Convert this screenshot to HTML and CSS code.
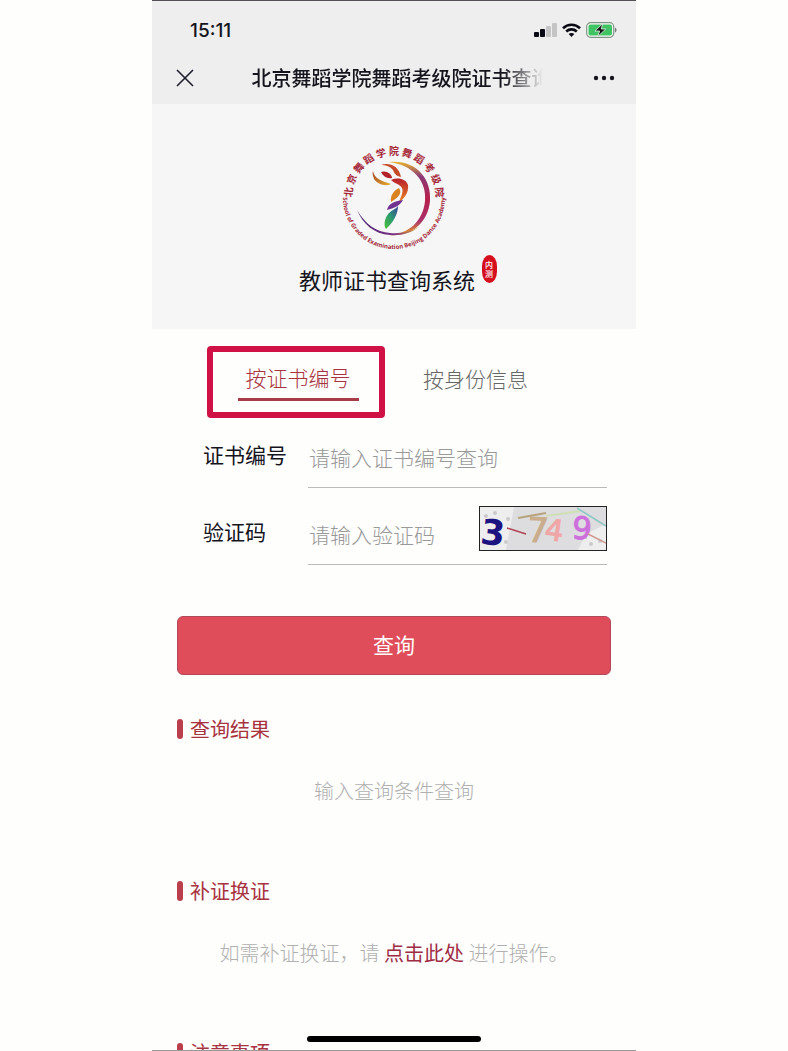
FILE: index.html
```html
<!DOCTYPE html>
<html lang="zh-CN">
<head>
    <meta charset="UTF-8">
    <meta name="viewport" content="width=device-width, initial-scale=1">
    <title>教师证书查询系统</title>
    <link rel="stylesheet" href="styles.css">
</head>
<body>
    <div class="phone">
        <header class="top-bar">
            <div class="status">
                <span class="time">15:11</span>
                <div class="status-icons">
                    <svg width="23" height="14" viewBox="0 0 23 14">
                        <rect x="0" y="9" width="5" height="5" rx="1" fill="#0a0a14"/>
                        <rect x="6" y="6" width="5" height="8" rx="1" fill="#0a0a14"/>
                        <rect x="12" y="3" width="5" height="11" rx="1" fill="#c4c4c4"/>
                        <rect x="18" y="0" width="5" height="14" rx="1" fill="#c4c4c4"/>
                    </svg>
                    <svg width="19" height="14" viewBox="0 0 19 14" fill="none" stroke="#0a0a14" stroke-width="2.6">
                        <path d="M1 5.2C5.8.6 13.2.6 18 5.2"/>
                        <path d="M4.2 8.5c3-2.8 7.6-2.8 10.6 0"/>
                        <path d="M9.5 14L6.7 11.1c1.6-1.4 4-1.4 5.6 0z" fill="#0a0a14" stroke="none"/>
                    </svg>
                    <svg width="31" height="16" viewBox="0 0 31 16">
                        <rect x=".7" y=".7" width="27" height="14.6" rx="4" fill="#fafafa" stroke="#7d9484" stroke-width="1.2"/>
                        <rect x="2.5" y="2.5" width="23.5" height="11" rx="2" fill="#40c463"/>
                        <path d="M29 5.5c2 .8 2 4.2 0 5z" fill="#777"/>
                        <path d="M16.8 1.500L9 9h4.600l-1.800 5.500L19.800 7h-4.600z" fill="#111" stroke="#e4f6e8" stroke-width=".8"/>
                    </svg>
                </div>
            </div>
            <div class="nav">
                <button type="button" class="nav-btn" aria-label="关闭">
                    <svg width="18" height="18" viewBox="0 0 18 18" stroke="#1d1d2c" stroke-width="1.6">
                        <path d="M1 1l16 16M17 1L1 17"/>
                    </svg>
                </button>
                <div class="nav-title">北京舞蹈学院舞蹈考级院证书查询</div>
                <button type="button" class="nav-btn" aria-label="更多">
                    <svg width="22" height="6" viewBox="0 0 22 6" fill="#15151f">
                        <circle cx="3" cy="3" r="2.2"/>
                        <circle cx="11" cy="3" r="2.2"/>
                        <circle cx="19" cy="3" r="2.2"/>
                    </svg>
                </button>
            </div>
        </header>

        <section class="hero">
            <svg class="logo" width="110" height="110" viewBox="0 0 110 110">
                <defs>
                    <path id="arc-top" d="M13 52A42 42 0 0 1 97 52"/>
                    <path id="arc-bottom" d="M4 53A51 51 0 0 0 106 53"/>
                    <linearGradient id="ring" x1="0" y1="0" x2="0" y2="1">
                        <stop offset="0" stop-color="#e8b62c"/>
                        <stop offset=".2" stop-color="#8a3b78"/>
                        <stop offset=".5" stop-color="#b81f4c"/>
                        <stop offset=".8" stop-color="#a83068"/>
                        <stop offset="1" stop-color="#e9a52e"/>
                    </linearGradient>
                    <linearGradient id="sweep" x1="0" y1="0" x2="1" y2="0">
                        <stop offset="0" stop-color="#43206f"/>
                        <stop offset=".6" stop-color="#7d3187"/>
                        <stop offset="1" stop-color="#e2a52c"/>
                    </linearGradient>
                    <linearGradient id="arm" x1="0" y1="0" x2="1" y2="1">
                        <stop offset="0" stop-color="#a3402c"/>
                        <stop offset="1" stop-color="#e5b02a"/>
                    </linearGradient>
                    <linearGradient id="body" x1="0" y1="0" x2="0" y2="1">
                        <stop offset="0" stop-color="#b8202c"/>
                        <stop offset="1" stop-color="#ee8a25"/>
                    </linearGradient>
                    <linearGradient id="leg" x1="1" y1="0" x2="0" y2="1">
                        <stop offset="0" stop-color="#3b3f9c"/>
                        <stop offset=".5" stop-color="#2a9a72"/>
                        <stop offset="1" stop-color="#4fc038"/>
                    </linearGradient>
                </defs>
                <text class="logo-cn"><textPath href="#arc-top" startOffset="50%" text-anchor="middle">北 京 舞 蹈 学 院 舞 蹈 考 级 院</textPath></text>
                <text class="logo-en"><textPath href="#arc-bottom" startOffset="50%" text-anchor="middle">School of Graded Examination Beijing Dance Academy</textPath></text>
                <path d="M50 17C76 14 93 33 91 56C89 78 72 92 50 90C70 89 84 76 86 56C88 36 74 20 50 17z" fill="url(#ring)"/>
                <path d="M18 65C24 79 35 89 51 90C62 91 72 88 80 82C72 86 62 89 51 88C37 87 26 79 18 65z" fill="url(#sweep)"/>
                <path d="M34 26C35 33 42 36 52 39C47 42 38 39 35 34C34 31 33 28 34 26z" fill="url(#arm)"/>
                <path d="M42 20C49 17 60 20 62 32C57 31 55 28 54 25C51 21 46 20 42 20z" fill="#c54a28"/>
                <path d="M42 27C47 25 53 29 53 33C48 34 44 31 42 27z" fill="#b32228"/>
                <path d="M52 35C59 32 67 34 69 40C70 48 65 53 60 58C61 52 65 48 63 43C61 39 56 39 52 35z" fill="url(#body)"/>
                <path d="M60 43C64 49 58 53 52 57C51 51 54 46 60 43z" fill="#d98222"/>
                <path d="M48 65C49 59 55 56 64 55C61 61 55 63 48 65z" fill="#71338e"/>
                <path d="M59 61C59 69 54 78 47 84C44 80 46 72 50 68C53 65 57 64 59 61z" fill="url(#leg)"/>
            </svg>
            <h1 class="title">
                教师证书查询系统
                <span class="badge">内测</span>
            </h1>
        </section>

        <main class="content">
            <div class="tabs">
                <div class="tab-frame">
                    <button type="button" class="tab active">按证书编号</button>
                </div>
                <button type="button" class="tab">按身份信息</button>
            </div>

            <form class="query-form">
                <div class="field">
                    <label for="cert-no">证书编号</label>
                    <div class="field-input">
                        <input type="text" id="cert-no" placeholder="请输入证书编号查询">
                    </div>
                </div>
                <div class="field">
                    <label for="captcha">验证码</label>
                    <div class="field-input">
                        <input type="text" id="captcha" placeholder="请输入验证码">
                        <svg class="captcha" width="128" height="45" viewBox="0 0 126 43">
                            <rect width="126" height="43" fill="#dddcde"/>
                            <path d="M0 0h34L26 43H0zM98 43l8-16 20-10v26z" fill="#efeeef"/>
                            <g fill="#cbc9cb">
                                <circle cx="6" cy="9" r="2"/>
                                <circle cx="15" cy="6" r="2"/>
                                <circle cx="28" cy="12" r="2"/>
                                <circle cx="26" cy="35" r="2"/>
                                <circle cx="111" cy="37" r="2"/>
                                <circle cx="120" cy="34" r="2"/>
                                <circle cx="106" cy="31" r="1"/>
                            </g>
                            <text class="digit" x="1" y="38" font-size="35" fill="#1c1480" transform="rotate(6 14 24)">3</text>
                            <text class="digit thin" x="47" y="35" font-size="34" fill="#c9ad8c" stroke="#c9ad8c" transform="rotate(3 58 24)">7</text>
                            <text class="digit thin" x="65" y="33" font-size="29" fill="#f0a6a6" stroke="#f0a6a6" transform="rotate(8 72 24)">4</text>
                            <text class="digit thin" x="92" y="32" font-size="31" fill="#cd70dc" stroke="#cd70dc" transform="rotate(5 100 22)">9</text>
                            <g fill="none">
                                <path d="M38 11L66 6" stroke="#b8a47c" stroke-width="2"/>
                                <path d="M66 9L100 4" stroke="#cfe0b4" stroke-width="2"/>
                                <path d="M97 1l29 18" stroke="#8cc8c4" stroke-width="1.5"/>
                                <path d="M108 27l18 9" stroke="#cf9b90" stroke-width="1.5"/>
                                <path d="M27 21l19 6" stroke="#b04050" stroke-width="1.5"/>
                            </g>
                        </svg>
                    </div>
                </div>
                <button type="button" class="submit">查询</button>
            </form>

            <section class="block">
                <h2>查询结果</h2>
                <p>输入查询条件查询</p>
            </section>
            <section class="block">
                <h2>补证换证</h2>
                <p>如需补证换证，请 <a href="#">点击此处</a> 进行操作。</p>
            </section>
            <section class="block">
                <h2>注意事项</h2>
            </section>
        </main>
        <div class="home-bar"></div>
    </div>
</body>
</html>
```
FILE: styles.css
```css
* {
    box-sizing: border-box;
}

body {
    margin: 0;
    background-color: #fefefd;
    font-family: "Noto Sans CJK SC", sans-serif;
    color: #14141c;
}

button {
    font-family: inherit;
    border: none;
    background: none;
    padding: 0;
    cursor: pointer;
}

svg {
    display: block;
}

.phone {
    position: relative;
    max-width: 484px;
    height: 100vh;
    margin: 0 auto;
    overflow: hidden;
    border-bottom: 1px solid #999;
}

/* top bar */
.top-bar {
    background-color: #eeeeee;
    border-top: 1px solid #555055;
}

.status {
    display: flex;
    align-items: center;
    justify-content: space-between;
    height: 58px;
    padding: 0 19px 0 38px;
}

.time {
    font-family: Inter, sans-serif;
    font-size: 19px;
    font-weight: 500;
}

.status-icons {
    display: flex;
    align-items: center;
    gap: 5px;
}

.nav {
    display: flex;
    align-items: center;
    justify-content: space-between;
    height: 45px;
    padding: 0 21px 8px 24px;
}

.nav-title {
    width: 300px;
    margin-left: 16px;
    overflow: hidden;
    white-space: nowrap;
    font-size: 20px;
    line-height: 30px;
    font-weight: 500;
    -webkit-mask-image: linear-gradient(to right, #000 84%, transparent 97%);
    mask-image: linear-gradient(to right, #000 84%, transparent 97%);
}

/* logo */
.hero {
    display: flex;
    flex-direction: column;
    align-items: center;
    gap: 8px;
    height: 225px;
    padding-top: 41px;
    background-color: #f6f6f6;
}

.logo {
    overflow: visible;
}

.logo-cn {
    font-family: "Noto Sans CJK SC", sans-serif;
    font-size: 10px;
    font-weight: 700;
    fill: #a5283a;
}

.logo-en {
    font-family: "Open Sans", sans-serif;
    font-size: 6px;
    font-weight: 700;
    fill: #a5283a;
}

.title {
    position: relative;
    margin: 0;
    padding-right: 14px;
    font-size: 22px;
    line-height: 32px;
    font-weight: 400;
}

.badge {
    position: absolute;
    top: -8px;
    right: -8px;
    width: 15px;
    height: 28px;
    padding: 5px 3px;
    border-radius: 50% / 40%;
    background-color: #d5101e;
    color: #fff;
    font-size: 8px;
    line-height: 9px;
    font-weight: 500;
}

/* content */
.content {
    padding: 17px 25px 0;
}

.tabs {
    display: flex;
    align-items: center;
    gap: 38px;
    padding-left: 30px;
}

.tab-frame {
    display: flex;
    justify-content: center;
    width: 178px;
    height: 72px;
    padding: 9px 0 0 4px;
    border: 6px solid #cf1145;
    border-radius: 4px;
}

.tab {
    height: 40px;
    padding-bottom: 8px;
    font-size: 21px;
    line-height: 30px;
    font-weight: 300;
    color: #666;
}

.tab.active {
    padding: 0 8px 6px;
    border-bottom: 3px solid #a83c48;
    color: #a83240;
}

.query-form {
    padding: 9px 4px 0 26px;
}

.field {
    display: flex;
    align-items: flex-end;
    justify-content: space-between;
}

.field label {
    padding-bottom: 18px;
    font-size: 21px;
    line-height: 32px;
}

.field-input {
    display: flex;
    align-items: flex-end;
    width: 299px;
    height: 61px;
    border-bottom: 1px solid #bbb;
}

.field + .field .field-input {
    height: 77px;
}

.field-input input {
    flex: 1;
    min-width: 0;
    height: 32px;
    margin-bottom: 14px;
    padding: 0 1px;
    border: none;
    outline: none;
    background: none;
    font-family: inherit;
    font-size: 21px;
    font-weight: 300;
    color: #333;
}

.field-input input::placeholder {
    color: #999;
    opacity: 1;
}

.captcha {
    margin-bottom: 13px;
    border: 1px solid #222;
}

.digit {
    font-family: "DejaVu Sans", sans-serif;
    font-weight: 700;
}

.digit.thin {
    font-weight: 400;
}

.submit {
    display: block;
    width: calc(100% + 30px);
    height: 59px;
    margin: 51px -4px 0 -26px;
    padding-bottom: 3px;
    border: 1px solid #b0495a;
    border-radius: 6px;
    background-color: #df4d5b;
    color: #fff;
    font-size: 21px;
}

.block {
    height: 162px;
    padding-top: 39px;
}

.block h2 {
    display: flex;
    align-items: center;
    gap: 7px;
    margin: 0;
    font-size: 20px;
    line-height: 30px;
    font-weight: 400;
    color: #a83240;
}

.block h2::before {
    content: "";
    width: 6px;
    height: 20px;
    border-radius: 3px;
    background-color: #bb3e4c;
}

.block p {
    margin: 32px 0 0;
    text-align: center;
    font-size: 20px;
    line-height: 30px;
    font-weight: 300;
    color: #b0b0b0;
}

.block a {
    color: #a02c44;
    font-weight: 400;
    text-decoration: none;
}

.home-bar {
    position: absolute;
    left: 50%;
    bottom: 8px;
    width: 174px;
    height: 6px;
    margin-left: -87px;
    border-radius: 3px;
    background-color: #000;
}
```
